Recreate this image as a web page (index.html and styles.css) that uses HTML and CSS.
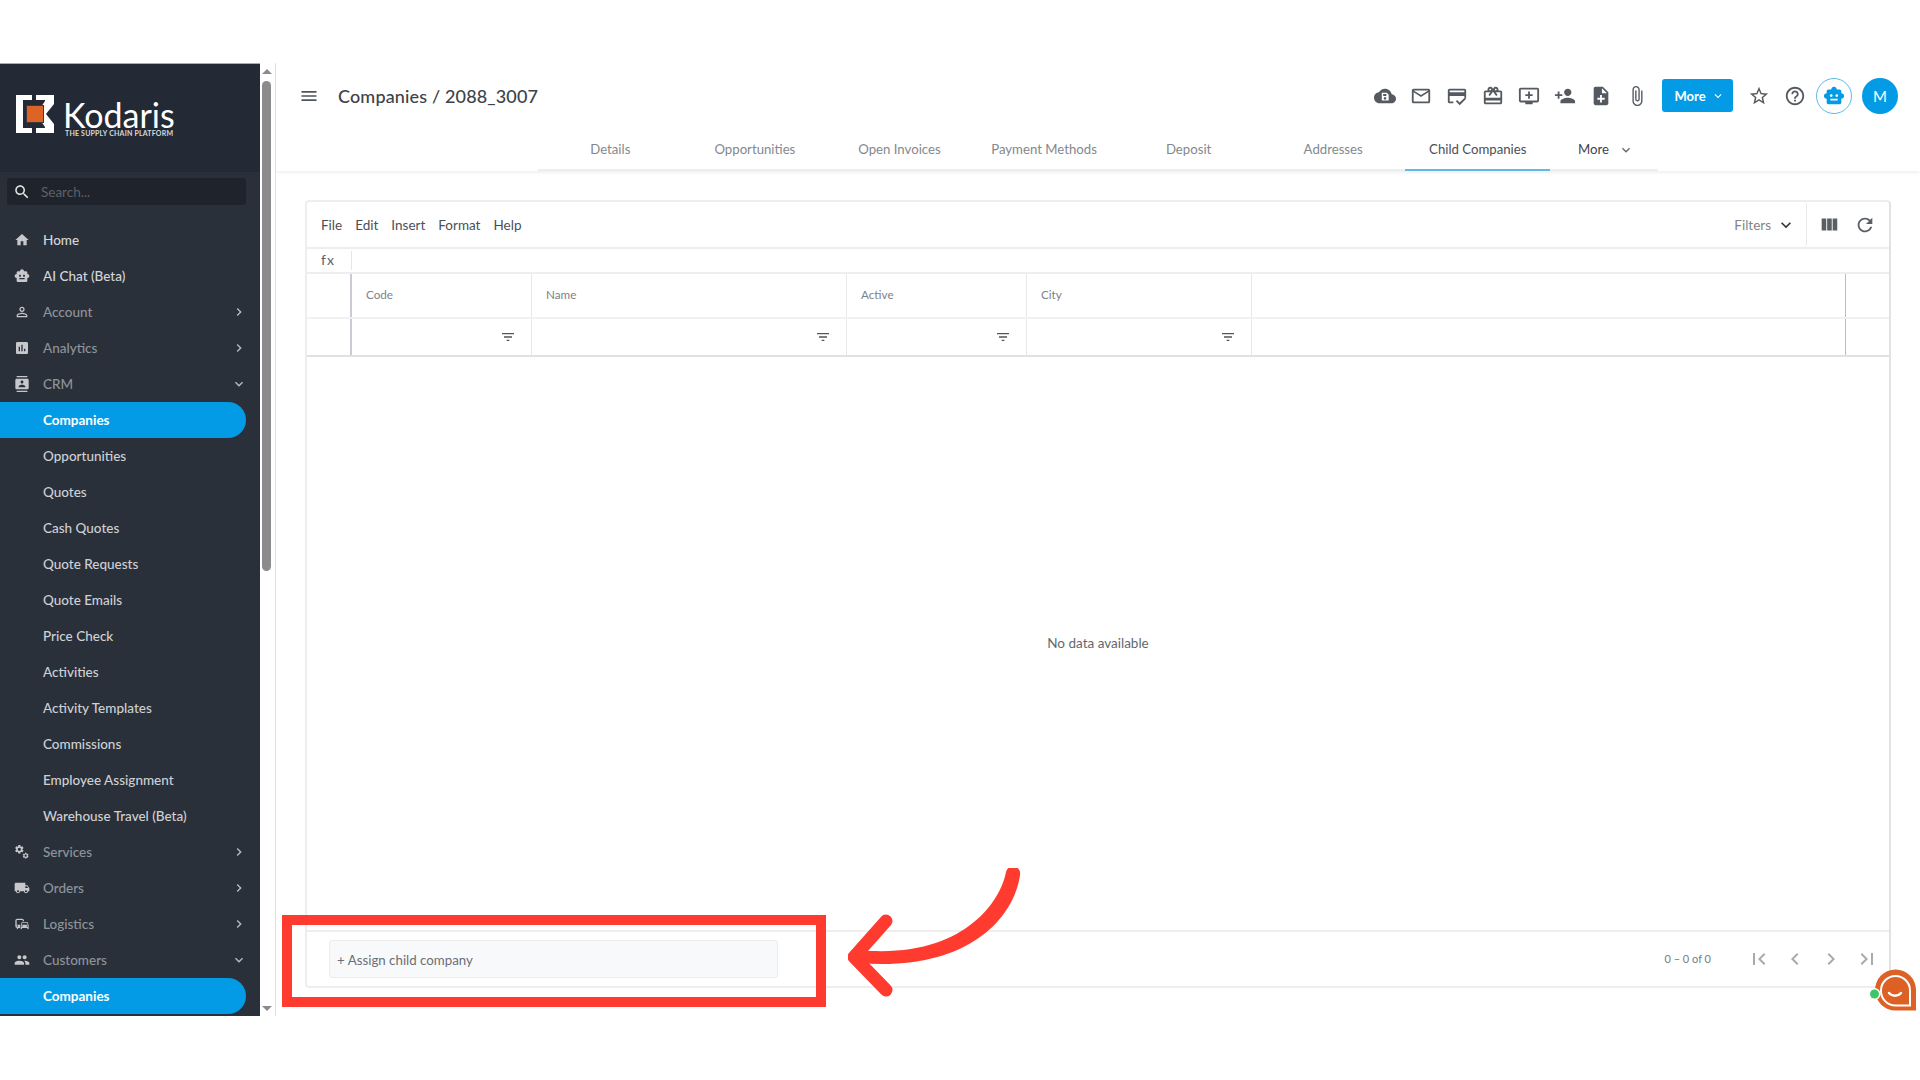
FILE: index.html
```html
<!DOCTYPE html>
<html lang="en">
<head>
<meta charset="utf-8">
<title>Companies / 2088_3007</title>
<link rel="stylesheet" href="styles.css">
</head>
<body>
<svg class="defs" aria-hidden="true">
  <symbol id="i-home" viewBox="0 0 24 24"><path d="M10 20v-6h4v6h5v-8h3L12 3 2 12h3v8z"/></symbol>
  <symbol id="i-menu" viewBox="0 0 24 24"><path d="M3 18h18v-2H3v2zm0-5h18v-2H3v2zm0-7v2h18V6H3z"/></symbol>
  <symbol id="i-search" viewBox="0 0 24 24"><path d="M15.5 14h-.79l-.28-.27C15.41 12.59 16 11.11 16 9.5 16 5.91 13.09 3 9.5 3S3 5.91 3 9.5 5.91 16 9.5 16c1.61 0 3.09-.59 4.23-1.57l.27.28v.79l5 4.99L20.49 19l-4.99-5zm-6 0C7.01 14 5 11.99 5 9.5S7.01 5 9.5 5 14 7.01 14 9.5 11.99 14 9.5 14z"/></symbol>
  <symbol id="i-person" viewBox="0 0 24 24"><path d="M12 5.9c1.16 0 2.1.94 2.1 2.1s-.94 2.1-2.1 2.1S9.9 9.16 9.9 8s.94-2.1 2.1-2.1m0 9c2.97 0 6.1 1.46 6.1 2.1v1.1H5.9V17c0-.64 3.13-2.1 6.1-2.1M12 4C9.79 4 8 5.79 8 8s1.79 4 4 4 4-1.79 4-4-1.79-4-4-4zm0 9c-2.67 0-8 1.34-8 4v3h16v-3c0-2.66-5.33-4-8-4z"/></symbol>
  <symbol id="i-analytics" viewBox="0 0 24 24"><path d="M19 3H5c-1.1 0-2 .9-2 2v14c0 1.1.9 2 2 2h14c1.1 0 2-.9 2-2V5c0-1.1-.9-2-2-2zM9 17H7v-7h2v7zm4 0h-2V7h2v10zm4 0h-2v-4h2v4z"/></symbol>
  <symbol id="i-contacts" viewBox="0 0 24 24"><path d="M20 0H4v2h16V0zM4 24h16v-2H4v2zM20 4H4c-1.1 0-2 .9-2 2v12c0 1.1.9 2 2 2h16c1.1 0 2-.9 2-2V6c0-1.1-.9-2-2-2zm-8 2.75c1.24 0 2.25 1.01 2.25 2.25s-1.01 2.25-2.25 2.25S9.75 10.24 9.75 9 10.76 6.75 12 6.75zM17 17H7v-1.5c0-1.67 3.33-2.5 5-2.5s5 .83 5 2.5V17z"/></symbol>
  <symbol id="i-bot" viewBox="0 0 24 24"><path d="M20 9V7c0-1.1-.9-2-2-2h-3c0-1.66-1.34-3-3-3S9 3.34 9 5H6c-1.1 0-2 .9-2 2v2c-1.66 0-3 1.34-3 3s1.34 3 3 3v4c0 1.1.9 2 2 2h12c1.1 0 2-.9 2-2v-4c1.66 0 3-1.34 3-3s-1.34-3-3-3zM7.5 11.5c0-.83.67-1.5 1.5-1.5s1.5.67 1.5 1.5S9.83 13 9 13s-1.5-.67-1.5-1.5zM16 17H8v-2h8v2zm-1-4c-.83 0-1.5-.67-1.5-1.5S14.17 10 15 10s1.5.67 1.5 1.5S15.83 13 15 13z"/></symbol>
  <symbol id="i-gear" viewBox="0 0 24 24"><path d="M19.14 12.94c.04-.3.06-.61.06-.94 0-.32-.02-.64-.07-.94l2.03-1.58c.18-.14.23-.41.12-.61l-1.92-3.32c-.12-.22-.37-.29-.59-.22l-2.39.96c-.5-.38-1.03-.7-1.62-.94l-.36-2.54c-.04-.24-.24-.41-.48-.41h-3.84c-.24 0-.43.17-.47.41l-.36 2.54c-.59.24-1.13.57-1.62.94l-2.39-.96c-.22-.08-.47 0-.59.22L2.74 8.87c-.12.21-.08.47.12.61l2.03 1.58c-.05.3-.09.63-.09.94s.02.64.07.94l-2.03 1.58c-.18.14-.23.41-.12.61l1.92 3.32c.12.22.37.29.59.22l2.39-.96c.5.38 1.03.7 1.62.94l.36 2.54c.05.24.24.41.48.41h3.84c.24 0 .44-.17.47-.41l.36-2.54c.59-.24 1.13-.56 1.62-.94l2.39.96c.22.08.47 0 .59-.22l1.92-3.32c.12-.22.07-.47-.12-.61l-2.01-1.58zM12 15.6c-1.98 0-3.6-1.62-3.6-3.6s1.62-3.6 3.6-3.6 3.6 1.62 3.6 3.6-1.62 3.6-3.6 3.6z"/></symbol>
  <symbol id="i-services" viewBox="0 0 24 24"><use href="#i-gear" x="0" y="0" width="16" height="16"/><use href="#i-gear" x="12" y="12" width="11" height="11"/></symbol>
  <symbol id="i-truck" viewBox="0 0 24 24"><path d="M20 8h-3V4H3c-1.1 0-2 .9-2 2v11h2c0 1.66 1.34 3 3 3s3-1.34 3-3h6c0 1.66 1.34 3 3 3s3-1.34 3-3h2v-5l-3-4zM6 18.5c-.83 0-1.5-.67-1.5-1.5s.67-1.5 1.5-1.5 1.5.67 1.5 1.5-.67 1.5-1.5 1.5zm13.5-9l1.96 2.5H17V9.5h2.5zm-1.5 9c-.83 0-1.5-.67-1.5-1.5s.67-1.5 1.5-1.5 1.5.67 1.5 1.5-.67 1.5-1.5 1.5z"/></symbol>
  <symbol id="i-commute" viewBox="0 0 24 24"><path d="M12 4H5C3.34 4 2 5.34 2 7v8c0 1.66 1.34 3 3 3l-1 1v1h1l2-2.03L9 18v-5H4V5.98L13 6v2h2V7c0-1.66-1.34-3-3-3zM5 14c.55 0 1 .45 1 1s-.45 1-1 1-1-.45-1-1 .45-1 1-1zm15.57-4.34c-.14-.4-.52-.66-.97-.66h-7.19c-.46 0-.83.26-.98.66L10 13.77l.01 5.51c0 .38.31.72.69.72h.62c.38 0 .68-.38.68-.76V18h8v1.24c0 .38.31.76.69.76h.61c.38 0 .69-.34.69-.72l.01-1.37v-4.14l-1.43-4.11zm-8.16.34h7.19l1.03 3h-9.25l1.03-3zM12 16c-.55 0-1-.45-1-1s.45-1 1-1 1 .45 1 1-.45 1-1 1zm8 0c-.55 0-1-.45-1-1s.45-1 1-1 1 .45 1 1-.45 1-1 1z"/></symbol>
  <symbol id="i-people" viewBox="0 0 24 24"><path d="M16 11c1.66 0 2.99-1.34 2.99-3S17.66 5 16 5c-1.66 0-3 1.34-3 3s1.34 3 3 3zm-8 0c1.66 0 2.99-1.34 2.99-3S9.66 5 8 5C6.34 5 5 6.34 5 8s1.34 3 3 3zm0 2c-2.33 0-7 1.17-7 3.5V19h14v-2.5c0-2.33-4.67-3.5-7-3.5zm8 0c-.29 0-.62.02-.97.05 1.16.84 1.97 1.97 1.97 3.45V19h6v-2.5c0-2.33-4.67-3.5-7-3.5z"/></symbol>
  <symbol id="i-right" viewBox="0 0 24 24"><path d="M10 6L8.59 7.41 13.17 12l-4.58 4.59L10 18l6-6z"/></symbol>
  <symbol id="i-left" viewBox="0 0 24 24"><path d="M15.41 7.41L14 6l-6 6 6 6 1.41-1.41L10.83 12z"/></symbol>
  <symbol id="i-down" viewBox="0 0 24 24"><path d="M16.59 8.59L12 13.17 7.41 8.59 6 10l6 6 6-6z"/></symbol>
  <symbol id="i-cloud" viewBox="0 0 24 24"><path fill-rule="evenodd" d="M19.35 10.04C18.67 6.59 15.64 4 12 4 9.11 4 6.6 5.64 5.35 8.04 2.34 8.36 0 10.91 0 14c0 3.31 2.69 6 6 6h13c2.76 0 5-2.24 5-5 0-2.64-2.05-4.78-4.65-4.96zM8.5 8.5h5.5l2 2v6.5H8.500zM10 9.800v2.200h3.500V9.800zM12 13.200a1.400 1.400 0 1 0 .01 0z"/></symbol>
  <symbol id="i-mail" viewBox="0 0 24 24"><path d="M20 4H4c-1.1 0-1.99.9-1.99 2L2 18c0 1.1.9 2 2 2h16c1.1 0 2-.9 2-2V6c0-1.1-.9-2-2-2zm0 14H4V8l8 5 8-5v10zm-8-7L4 6h16l-8 5z"/></symbol>
  <symbol id="i-score" viewBox="0 0 24 24"><path d="M20 4H4c-1.11 0-2 .89-2 2v12c0 1.11.89 2 2 2h4v-2H4v-6h16v2h2V6c0-1.11-.89-2-2-2zm0 4H4V6h16v2zm-5.07 11.17l-2.83-2.83-1.41 1.41L14.93 22 22 14.93l-1.41-1.41-5.66 5.65z"/></symbol>
  <symbol id="i-redeem" viewBox="0 0 24 24"><path d="M20 6h-2.18c.11-.31.18-.65.18-1 0-1.66-1.34-3-3-3-1.05 0-1.96.54-2.5 1.35l-.5.67-.5-.68C10.96 2.54 10.05 2 9 2 7.34 2 6 3.34 6 5c0 .35.07.69.18 1H4c-1.11 0-1.99.89-1.99 2L2 19c0 1.11.89 2 2 2h16c1.11 0 2-.89 2-2V8c0-1.11-.89-2-2-2zm-5-2c.55 0 1 .45 1 1s-.45 1-1 1-1-.45-1-1 .45-1 1-1zM9 4c.55 0 1 .45 1 1s-.45 1-1 1-1-.45-1-1 .45-1 1-1zm11 15H4v-2h16v2zm0-5H4V8h5.08L7 10.83 8.62 12 11 8.76l1-1.36 1 1.36L15.38 12 17 10.83 14.92 8H20v6z"/></symbol>
  <symbol id="i-queue" viewBox="0 0 24 24"><path d="M21 3H3c-1.11 0-2 .89-2 2v12c0 1.1.89 2 2 2h5v2h8v-2h5c1.1 0 1.99-.9 1.99-2L23 5c0-1.11-.9-2-2-2zm0 14H3V5h18v12zm-5-7v2h-3v3h-2v-3H8v-2h3V7h2v3h3z"/></symbol>
  <symbol id="i-padd" viewBox="0 0 24 24"><path d="M15 12c2.21 0 4-1.79 4-4s-1.79-4-4-4-4 1.79-4 4 1.790 4 4 4zm-9-2V7H4v3H1v2h3v3h2v-3h3v-2H6zm9 4c-2.67 0-8 1.34-8 4v2h16v-2c0-2.66-5.33-4-8-4z"/></symbol>
  <symbol id="i-note" viewBox="0 0 24 24"><path d="M14 2H6c-1.1 0-1.99.9-1.99 2L4 20c0 1.1.89 2 1.99 2H18c1.1 0 2-.9 2-2V8l-6-6zm2 14h-3v3h-2v-3H8v-2h3v-3h2v3h3v2zm-3-7V3.5L18.5 9H13z"/></symbol>
  <symbol id="i-clip" viewBox="0 0 24 24"><path d="M16.5 6v11.5c0 2.21-1.79 4-4 4s-4-1.79-4-4V5c0-1.38 1.12-2.5 2.5-2.5s2.5 1.12 2.5 2.5v10.5c0 .55-.45 1-1 1s-1-.45-1-1V6H10v9.5c0 1.38 1.12 2.5 2.5 2.5s2.5-1.12 2.5-2.5V5c0-2.21-1.79-4-4-4S7 2.79 7 5v12.5c0 3.04 2.46 5.5 5.5 5.5s5.5-2.46 5.5-5.5V6h-1.5z"/></symbol>
  <symbol id="i-star" viewBox="0 0 24 24"><path d="M22 9.24l-7.19-.62L12 2 9.19 8.63 2 9.24l5.46 4.73L5.82 21 12 17.27 18.18 21l-1.63-7.03L22 9.24zM12 15.4l-3.76 2.27 1-4.28-3.32-2.88 4.38-.38L12 6.1l1.71 4.04 4.38.38-3.32 2.88 1 4.28L12 15.4z"/></symbol>
  <symbol id="i-help" viewBox="0 0 24 24"><path d="M11 18h2v-2h-2v2zm1-16C6.48 2 2 6.48 2 12s4.48 10 10 10 10-4.48 10-10S17.52 2 12 2zm0 18c-4.41 0-8-3.59-8-8s3.59-8 8-8 8 3.59 8 8-3.59 8-8 8zm0-14c-2.21 0-4 1.79-4 4h2c0-1.1.9-2 2-2s2 .9 2 2c0 2-3 1.75-3 5h2c0-2.25 3-2.5 3-5 0-2.21-1.79-4-4-4z"/></symbol>
  <symbol id="i-filter" viewBox="0 0 24 24"><path d="M10 18h4v-2h-4v2zM3 6v2h18V6H3zm3 7h12v-2H6v2z"/></symbol>
  <symbol id="i-cols" viewBox="0 0 24 24"><path d="M10 18h5V5h-5v13zm-6 0h5V5H4v13zM16 5v13h5V5h-5z"/></symbol>
  <symbol id="i-refresh" viewBox="0 0 24 24"><path d="M17.65 6.35C16.2 4.9 14.21 4 12 4c-4.42 0-7.99 3.58-7.99 8s3.57 8 7.99 8c3.73 0 6.84-2.55 7.73-6h-2.08c-.82 2.33-3.04 4-5.65 4-3.31 0-6-2.69-6-6s2.69-6 6-6c1.66 0 3.14.69 4.22 1.78L13 11h7V4l-2.35 2.35z"/></symbol>
  <symbol id="i-first" viewBox="0 0 24 24"><path d="M18.41 16.59L13.82 12l4.59-4.59L17 6l-6 6 6 6zM6 6h2v12H6z"/></symbol>
  <symbol id="i-last" viewBox="0 0 24 24"><path d="M5.59 7.41L10.18 12l-4.59 4.59L7 18l6-6-6-6zM16 6h2v12h-2z"/></symbol>
</svg>

<div class="frame">
  <aside class="sidebar">
    <div class="brand">
      <svg class="brand-mark" viewBox="0 0 38 38">
        <path class="mark-white" d="M0 0h16v5H7v28h9v5H0z"/>
        <path class="mark-white" d="M20 0h18v9l-8 10 8 10v9H20v-5h9v-1l-6-9 0-8 6-9V5h-9z"/>
        <rect class="mark-orange" x="10.500" y="10.500" width="17" height="17"/>
      </svg>
      <div class="brand-text">
        <span class="brand-name">Kodaris</span>
        <span class="brand-tag">THE SUPPLY CHAIN PLATFORM</span>
      </div>
    </div>
    <div class="search">
      <svg class="search-icon"><use href="#i-search"/></svg>
      <span class="search-text">Search...</span>
    </div>
    <nav class="nav">
      <a class="nav-item bright"><svg class="nav-icon"><use href="#i-home"/></svg><span>Home</span></a>
      <a class="nav-item bright"><svg class="nav-icon"><use href="#i-bot"/></svg><span>AI Chat (Beta)</span></a>
      <a class="nav-item"><svg class="nav-icon"><use href="#i-person"/></svg><span>Account</span><svg class="nav-caret"><use href="#i-right"/></svg></a>
      <a class="nav-item"><svg class="nav-icon"><use href="#i-analytics"/></svg><span>Analytics</span><svg class="nav-caret"><use href="#i-right"/></svg></a>
      <a class="nav-item"><svg class="nav-icon"><use href="#i-contacts"/></svg><span>CRM</span><svg class="nav-caret"><use href="#i-down"/></svg></a>
      <a class="nav-item sub active"><span>Companies</span></a>
      <a class="nav-item sub"><span>Opportunities</span></a>
      <a class="nav-item sub"><span>Quotes</span></a>
      <a class="nav-item sub"><span>Cash Quotes</span></a>
      <a class="nav-item sub"><span>Quote Requests</span></a>
      <a class="nav-item sub"><span>Quote Emails</span></a>
      <a class="nav-item sub"><span>Price Check</span></a>
      <a class="nav-item sub"><span>Activities</span></a>
      <a class="nav-item sub"><span>Activity Templates</span></a>
      <a class="nav-item sub"><span>Commissions</span></a>
      <a class="nav-item sub"><span>Employee Assignment</span></a>
      <a class="nav-item sub"><span>Warehouse Travel (Beta)</span></a>
      <a class="nav-item"><svg class="nav-icon"><use href="#i-services"/></svg><span>Services</span><svg class="nav-caret"><use href="#i-right"/></svg></a>
      <a class="nav-item"><svg class="nav-icon"><use href="#i-truck"/></svg><span>Orders</span><svg class="nav-caret"><use href="#i-right"/></svg></a>
      <a class="nav-item"><svg class="nav-icon"><use href="#i-commute"/></svg><span>Logistics</span><svg class="nav-caret"><use href="#i-right"/></svg></a>
      <a class="nav-item"><svg class="nav-icon"><use href="#i-people"/></svg><span>Customers</span><svg class="nav-caret"><use href="#i-down"/></svg></a>
      <a class="nav-item sub active"><span>Companies</span></a>
    </nav>
  </aside>

  <div class="scrollbar">
    <span class="arrow-up"></span>
    <span class="thumb"></span>
    <span class="track-fill"></span>
    <span class="arrow-down"></span>
  </div>

  <main class="main">
    <header class="header">
      <div class="topbar">
        <svg class="burger"><use href="#i-menu"/></svg>
        <h1 class="title">Companies / 2088_3007</h1>
        <div class="actions">
          <svg class="action"><use href="#i-cloud"/></svg>
          <svg class="action"><use href="#i-mail"/></svg>
          <svg class="action"><use href="#i-score"/></svg>
          <svg class="action"><use href="#i-redeem"/></svg>
          <svg class="action"><use href="#i-queue"/></svg>
          <svg class="action"><use href="#i-padd"/></svg>
          <svg class="action"><use href="#i-note"/></svg>
          <svg class="action"><use href="#i-clip"/></svg>
          <button class="more-btn">More<svg class="more-caret"><use href="#i-down"/></svg></button>
          <svg class="action star"><use href="#i-star"/></svg>
          <svg class="action"><use href="#i-help"/></svg>
          <span class="bot-circle"><svg class="bot-icon"><use href="#i-bot"/></svg></span>
          <span class="avatar">M</span>
        </div>
      </div>
      <div class="tabs">
        <a class="tab">Details</a>
        <a class="tab">Opportunities</a>
        <a class="tab">Open Invoices</a>
        <a class="tab">Payment Methods</a>
        <a class="tab">Deposit</a>
        <a class="tab">Addresses</a>
        <a class="tab current">Child Companies</a>
        <a class="tab more">More<svg class="tab-caret"><use href="#i-down"/></svg></a>
      </div>
    </header>

    <section class="content">
      <div class="card">
        <div class="menu-row">
          <div class="menus"><span>File</span><span>Edit</span><span>Insert</span><span>Format</span><span>Help</span></div>
          <div class="filters"><span>Filters</span><svg class="filters-caret"><use href="#i-down"/></svg></div>
          <div class="tools">
            <svg class="tool"><use href="#i-cols"/></svg>
            <svg class="tool"><use href="#i-refresh"/></svg>
          </div>
        </div>
        <div class="fx-row"><span class="fx">fx</span></div>
        <div class="grid head">
          <div class="cell gutter"></div>
          <div class="cell">Code</div>
          <div class="cell">Name</div>
          <div class="cell">Active</div>
          <div class="cell">City</div>
          <div class="cell blank"></div>
          <div class="cell end"></div>
        </div>
        <div class="grid filter">
          <div class="cell gutter"></div>
          <div class="cell"><svg class="filter-icon"><use href="#i-filter"/></svg></div>
          <div class="cell"><svg class="filter-icon"><use href="#i-filter"/></svg></div>
          <div class="cell"><svg class="filter-icon"><use href="#i-filter"/></svg></div>
          <div class="cell"><svg class="filter-icon"><use href="#i-filter"/></svg></div>
          <div class="cell blank"></div>
          <div class="cell end"></div>
        </div>
        <div class="empty">No data available</div>
        <div class="footer">
          <div class="assign">+ Assign child company</div>
          <div class="pager">
            <span class="range">0 – 0 of 0</span>
            <svg class="page-btn"><use href="#i-first"/></svg>
            <svg class="page-btn"><use href="#i-left"/></svg>
            <svg class="page-btn"><use href="#i-right"/></svg>
            <svg class="page-btn"><use href="#i-last"/></svg>
          </div>
        </div>
      </div>
    </section>
  </main>
</div>

<svg class="chat" viewBox="0 0 46 46">
  <path class="chat-bg" d="M5 23a20.500 20.500 0 1 1 41 0v20.500H25.500A20.500 20.500 0 0 1 5 23z"/>
  <path class="chat-ring" d="M11 23.500a14.500 14.500 0 1 1 29 0v15H25.500A14.500 14.500 0 0 1 11 23.500z"/>
  <path class="chat-smile" d="M19 26c3 3.500 9 3.500 12 0"/>
  <circle class="chat-ring-dot" cx="4.500" cy="27" r="6"/>
  <circle class="chat-dot" cx="4.500" cy="27" r="4.500"/>
</svg>

<div class="callout"></div>
<svg class="arrow" viewBox="0 0 180 140">
  <path class="arrow-shaft" d="M158 4C152 36 112 92 10 82L10 95C120 104 166 50 172 7A7 7 0 0 0 158 4z"/>
  <path class="arrow-head" d="M38 53L6 89L38 122"/>
</svg>
</body>
</html>
```
FILE: styles.css
```css
* { box-sizing: border-box; }
html, body { margin: 0; padding: 0; }
body {
  width: 1920px;
  height: 1080px;
  position: relative;
  overflow: hidden;
  background: #fff;
  padding-top: 63px;
  font-family: "Lato", "Noto Sans", sans-serif;
  font-size: 13.5px;
  color: #4a4f57;
}
.defs { position: absolute; width: 0; height: 0; }
svg { fill: currentColor; display: block; flex: none; }

.frame { display: flex; height: 953px; }

/* Sidebar */
.sidebar {
  width: 260px;
  flex: none;
  background: #2a303a;
  border-top: 1px solid #a9abaf;
  display: flex;
  flex-direction: column;
  overflow: hidden;
  color: #8f949b;
}
.brand {
  height: 108px;
  flex: none;
  background: #242a35;
  padding: 31px 0 0 16px;
  display: flex;
  gap: 9px;
}
.brand-mark { width: 38px; height: 38px; }
.mark-white { fill: #fff; }
.mark-orange { fill: #dd6326; stroke: #3a3a3a; stroke-width: 1; }
.brand-text { display: flex; flex-direction: column; margin-top: 6px; }
.brand-name { font-size: 34px; line-height: 28px; font-weight: 400; color: #fff; }
.brand-tag { font-size: 7px; line-height: 8px; font-weight: 700; color: #d8d8d8; letter-spacing: .2px; white-space: nowrap; margin-left: 2px; }
.search {
  flex: none;
  height: 27px;
  margin: 6px 14px 17px 7px;
  border-radius: 3px;
  background: #1f242c;
  display: flex;
  align-items: center;
  padding-left: 6px;
  color: #5c6168;
}
.search-icon { width: 18px; height: 18px; color: #e4e6e8; }
.search-text { margin-left: 10px; }
.nav { display: flex; flex-direction: column; }
.nav-item {
  height: 36px;
  flex: none;
  width: 246px;
  display: flex;
  align-items: center;
  padding-left: 14px;
  border-radius: 0 18px 18px 0;
  font-weight: 500;
}
.nav-item.bright { color: #d4d6d9; }
.nav-item.sub { padding-left: 43px; color: #ced1d4; }
.nav-item.active { background: #039be5; color: #fff; font-weight: 700; }
.nav-icon { width: 16px; height: 16px; margin-right: 13px; color: #c6c8cb; }
.nav-caret { width: 16px; height: 16px; margin-left: auto; margin-right: -1px; color: #b9bcc0; }

/* Scrollbar */
.scrollbar {
  width: 16px;
  flex: none;
  display: flex;
  flex-direction: column;
  align-items: center;
  padding: 6px 2px 5px 0;
  background: #fff;
  border-right: 1px solid #e2e2e2;
}
.arrow-up, .arrow-down { width: 0; height: 0; border-left: 5px solid transparent; border-right: 5px solid transparent; flex: none; }
.arrow-up { border-bottom: 5px solid #8b8b8b; }
.arrow-down { border-top: 5px solid #8b8b8b; }
.thumb { width: 9px; height: 490px; margin-top: 7px; border-radius: 5px; background: #8b8b8b; flex: none; }
.track-fill { flex: 1; }

/* Main */
.main { flex: 1; display: flex; flex-direction: column; min-width: 0; }
.header { flex: none; height: 108px; box-shadow: 0 2px 3px rgba(0,0,0,.06); position: relative; }
.topbar { height: 65px; display: flex; align-items: center; padding: 0 22px 0 23px; }
.burger { width: 20px; height: 20px; color: #50555c; }
.title { margin: 0 0 0 19px; font-size: 18px; font-weight: 500; color: #3d4249; letter-spacing: .15px; }
.actions { margin-left: auto; display: flex; align-items: center; }
.action { width: 36px; height: 22px; color: #555a61; }
.more-btn {
  width: 71px;
  height: 33px;
  margin: 0 8px 0 7px;
  border: 0;
  border-radius: 3px;
  background: #039be5;
  color: #fff;
  font: 700 13px "Lato", sans-serif;
  display: flex;
  align-items: center;
  justify-content: center;
  padding: 0 0 0 4px;
}
.more-caret { width: 14px; height: 14px; margin-left: 5px; }
.bot-circle {
  width: 36px; height: 36px; border-radius: 50%;
  border: 1.500px solid #5cb9ec;
  color: #039be5;
  display: flex; align-items: center; justify-content: center;
  margin-left: 3px;
}
.bot-icon { width: 22px; height: 22px; }
.avatar {
  width: 36px; height: 36px; border-radius: 50%;
  background: #039be5; color: #fff;
  display: flex; align-items: center; justify-content: center;
  font-size: 15px;
  margin-left: 10px;
}
.tabs { display: flex; height: 43px; margin-left: 262px; width: 1120px; border-bottom: 2px solid #eceff1; }
.tab {
  width: 144.67px;
  height: 43px;
  display: flex;
  align-items: center;
  justify-content: center;
  color: #84888e;
  font-size: 13.2px;
  padding-bottom: 2px;
}
.tab.current { color: #4a4f57; border-bottom: 2px solid #5dbbe6; padding-bottom: 0; }
.tab.more { width: 108px; color: #3f444b; gap: 9px; padding-left: 4px; }
.tab-caret { width: 16px; height: 16px; color: #666; margin-top: 2px; }

/* Card */
.content { flex: 1; padding: 29px 29px 28px 29px; display: flex; min-height: 0; }
.card {
  flex: 1;
  display: flex;
  flex-direction: column;
  border: 2px solid #eeeeee;
  border-right-color: #e2e2e2;
  border-radius: 4px;
  min-width: 0;
}
.menu-row { height: 47px; flex: none; display: flex; align-items: center; border-bottom: 2px solid #eeeeee; }
.menus { display: flex; gap: 13px; padding-left: 14px; color: #4a4f57; }
.filters {
  margin-left: auto;
  height: 45px;
  width: 180px;
  display: flex;
  align-items: center;
  justify-content: flex-end;
  border-right: 1px solid #e8e8e8;
  border-radius: 0 4px 4px 0;
  padding-right: 10px;
  color: #7f848b;
  gap: 5px;
}
.filters-caret { width: 20px; height: 20px; color: #30353c; }
.tools { width: 82px; display: flex; align-items: center; padding-left: 11px; gap: 14px; }
.tool { width: 22px; height: 22px; color: #5a5f66; }
.fx-row { height: 25px; flex: none; border-bottom: 2px solid #eeeeee; display: flex; align-items: center; }
.fx { width: 45px; height: 19px; display: block; padding-left: 14px; line-height: 18px; font-size: 14px; color: #5c6168; border-right: 1px solid #e6e6e6; letter-spacing: 1px; }

.grid { display: grid; grid-template-columns: 45px 180px 315px 180px 225px 594px 1fr; flex: none; }
.grid.head { height: 45px; border-bottom: 2px solid #f1f1f1; }
.grid.filter { height: 38px; border-bottom: 2px solid #dfe2e5; }
.cell {
  border-right: 1px solid #e8e8e8;
  display: flex;
  align-items: center;
  padding: 0 15px;
  font-size: 11.7px;
  color: #7e8288;
}
.grid.head .cell { padding: 0 14px 4px; }
.cell.gutter { border-right: 2px solid #c9ccd2; }
.cell.blank { border-right: 1px solid #b9bcc6; }
.cell.end { border-right: 0; }
.filter-icon { width: 16px; height: 16px; margin-left: auto; color: #51565d; }
.empty { flex: 1; display: flex; align-items: center; justify-content: center; color: #63686e; padding-bottom: 2px; }
.footer {
  height: 56px;
  flex: none;
  border-top: 2px solid #eeeeee;
  display: flex;
  align-items: center;
  padding-left: 22px;
}
.assign {
  width: 449px;
  height: 38px;
  border: 1.500px solid #ececec;
  border-radius: 3px;
  background: #f8f9fb;
  display: flex;
  align-items: center;
  padding: 2px 0 0 7px;
  font-size: 13.3px;
  color: #6a6f75;
}
.pager { margin-left: auto; display: flex; align-items: center; padding-right: 4px; }
.range { font-size: 11px; color: #777c82; margin: 0 30px 2px 0; }
.page-btn { width: 36px; height: 24px; color: #a7abb1; }

/* Overlays */
.chat { position: absolute; left: 1870px; top: 967px; width: 46px; height: 46px; }
.chat-bg { fill: #dd6125; }
.chat-ring { fill: none; stroke: #fff; stroke-width: 2; }
.chat-smile { fill: none; stroke: #fff; stroke-width: 2.500; stroke-linecap: round; }
.chat-ring-dot { fill: #fff; }
.chat-dot { fill: #3fc46c; }
.callout { position: absolute; left: 282px; top: 915px; width: 544px; height: 92px; border: 10px solid #ff3b2f; }
.arrow { position: absolute; left: 848px; top: 868px; width: 180px; height: 140px; }
.arrow-shaft { fill: #ff3b2f; }
.arrow-head { fill: none; stroke: #ff3b2f; stroke-width: 13; stroke-linecap: round; stroke-linejoin: round; }
```
